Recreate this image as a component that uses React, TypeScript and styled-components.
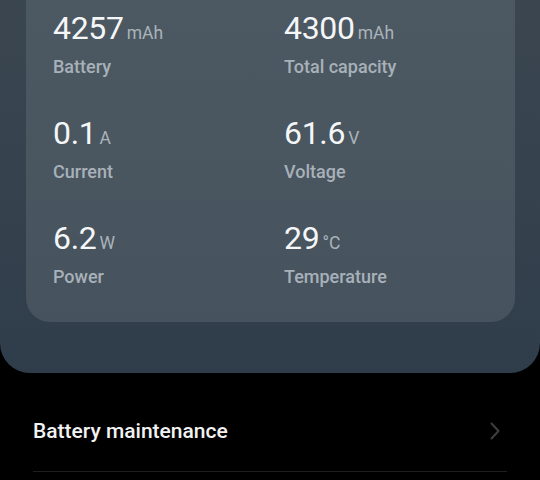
import React from "react";
import styled, { createGlobalStyle } from "styled-components";

const Global = createGlobalStyle`
  html, body { margin: 0; padding: 0; background: #000; }
  body { font-family: Roboto, "Noto Sans", "Liberation Sans", sans-serif; overflow: hidden; }
`;

const Page = styled.div`
  width: 540px;
  height: 480px;
  background: #000;
  overflow: hidden;
`;

const Panel = styled.section`
  margin-top: -20px;
  padding: 0 25px 51px 26px;
  background: linear-gradient(180deg, #3b4650 0%, #35414d 60%, #2f3d4b 100%);
  border-radius: 0 0 30px 30px;
`;

const Card = styled.div`
  display: grid;
  grid-template-columns: 231px 1fr;
  row-gap: 37px;
  padding: 30px 0 34px 27px;
  background: linear-gradient(180deg, #4d5962 0%, #49555f 60%, #46525d 100%);
  border-radius: 0 0 24px 24px;
`;

const Cell = styled.div`
  display: flex;
  flex-direction: column;
  gap: 10px;
`;

const ValueLine = styled.div`
  display: flex;
  align-items: baseline;
  height: 36px;
  line-height: 36px;
`;

const Value = styled.span`
  font-size: 32px;
  font-weight: 400;
  letter-spacing: -0.3px;
  color: #f4f6f7;
`;

const Unit = styled.span`
  margin-left: 3px;
  font-size: 17.5px;
  font-weight: 400;
  color: #aab3ba;
`;

const Label = styled.div`
  font-size: 18px;
  line-height: 22px;
  font-weight: 500;
  color: #a8b1b9;
`;

const List = styled.div`
  margin-top: 18px;
  padding: 0 33px;
`;

const Row = styled.div`
  display: flex;
  align-items: center;
  justify-content: space-between;
  height: 80px;
  border-bottom: 1px solid #1f1f1f;
`;

const RowTitle = styled.span`
  font-size: 21px;
  line-height: 24px;
  font-weight: 500;
  color: #f2f2f2;
`;

const Chevron = styled.svg`
  width: 10px;
  height: 18px;
  margin-right: 7px;
`;

const stats = [
  { value: "4257", unit: "mAh", label: "Battery" },
  { value: "4300", unit: "mAh", label: "Total capacity" },
  { value: "0.1", unit: "A", label: "Current" },
  { value: "61.6", unit: "V", label: "Voltage" },
  { value: "6.2", unit: "W", label: "Power" },
  { value: "29", unit: "°C", label: "Temperature" },
];

export default function App() {
  return (
    <Page>
      <Global />
      <Panel>
        <Card>
          {stats.map((s) => (
            <Cell key={s.label}>
              <ValueLine>
                <Value>{s.value}</Value>
                <Unit>{s.unit}</Unit>
              </ValueLine>
              <Label>{s.label}</Label>
            </Cell>
          ))}
        </Card>
      </Panel>
      <List>
        <Row>
          <RowTitle>Battery maintenance</RowTitle>
          <Chevron viewBox="0 0 10 18" fill="none">
            <polyline points="1.5,1.5 8.5,9 1.5,16.5" stroke="#3e3e3e" strokeWidth="2" strokeLinecap="round" strokeLinejoin="round" />
          </Chevron>
        </Row>
      </List>
    </Page>
  );
}
